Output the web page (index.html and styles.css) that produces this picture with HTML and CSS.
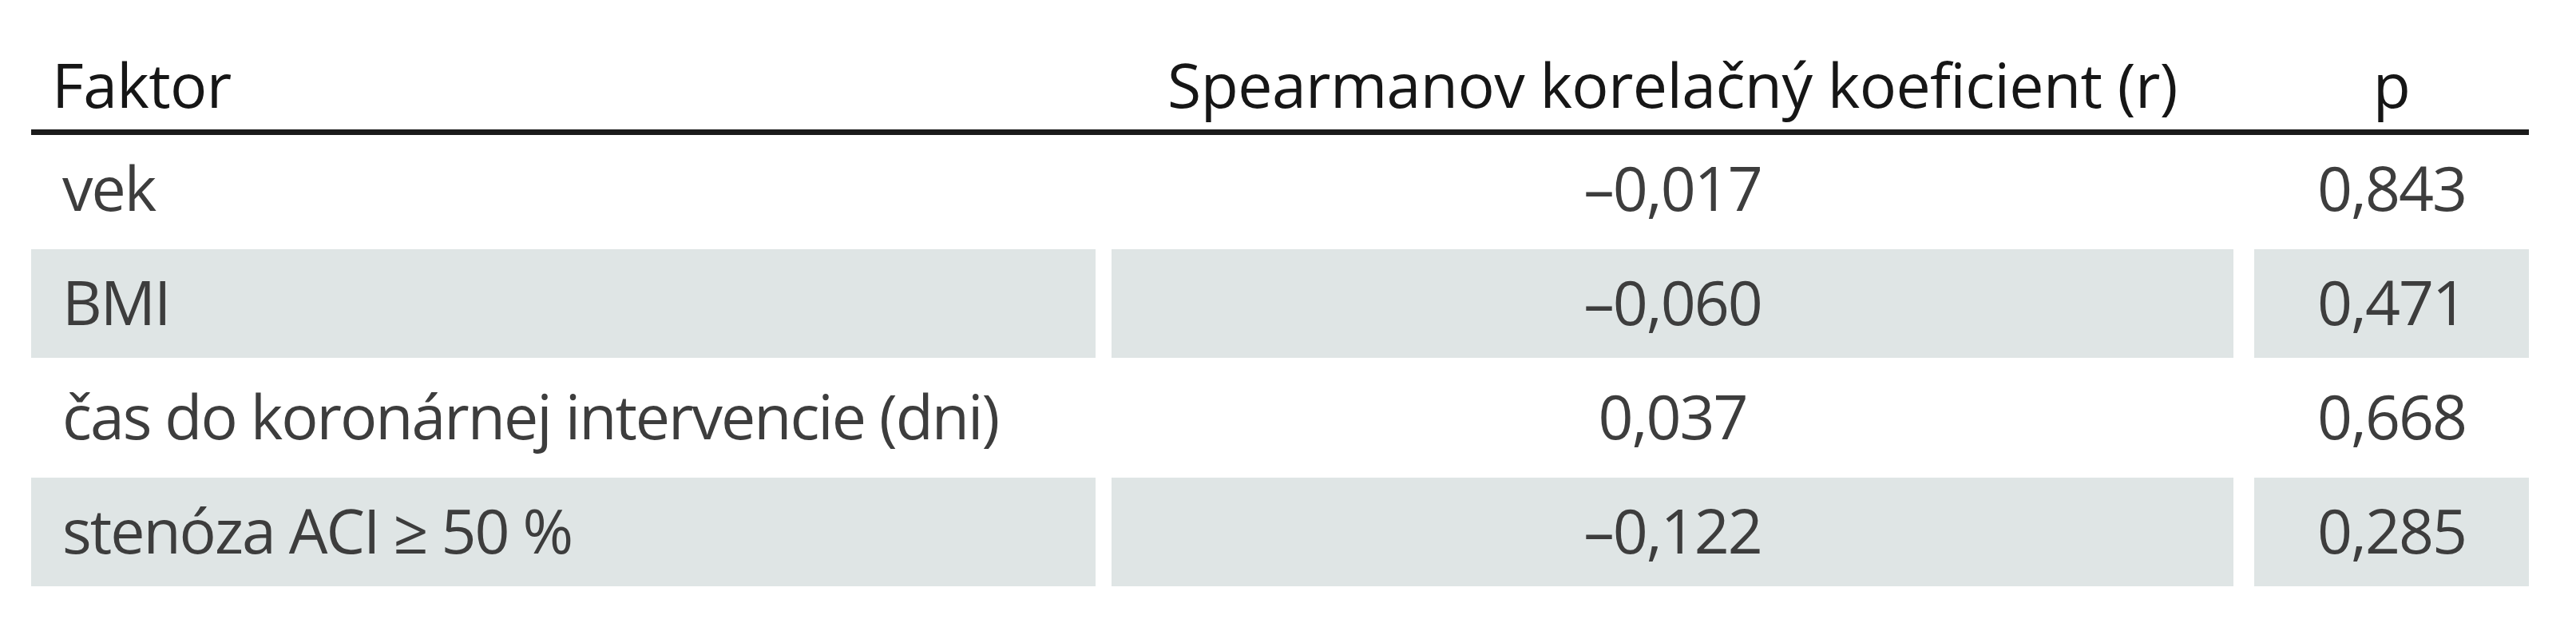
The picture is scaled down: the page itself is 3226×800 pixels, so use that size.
FILE: index.html
```html
<!DOCTYPE html>
<html lang="sk">
<head>
<meta charset="utf-8">
<title>Spearmanov korelačný koeficient</title>
<link rel="stylesheet" href="styles.css">
</head>
<body>
<table class="corr">
  <colgroup>
    <col class="c-factor">
    <col class="c-r">
    <col class="c-p">
  </colgroup>
  <thead>
    <tr>
      <th class="h-factor">Faktor</th>
      <th class="h-r">Spearmanov korelačný koeficient (r)</th>
      <th class="h-p">p</th>
    </tr>
  </thead>
  <tbody>
    <tr>
      <td class="factor">vek</td>
      <td class="r">–0,017</td>
      <td class="p">0,843</td>
    </tr>
    <tr class="shade">
      <td class="factor">BMI</td>
      <td class="r">–0,060</td>
      <td class="p">0,471</td>
    </tr>
    <tr>
      <td class="factor">čas do koronárnej intervencie (dni)</td>
      <td class="r">0,037</td>
      <td class="p">0,668</td>
    </tr>
    <tr class="shade">
      <td class="factor">stenóza ACI ≥ 50 %</td>
      <td class="r">–0,122</td>
      <td class="p">0,285</td>
    </tr>
  </tbody>
</table>
</body>
</html>
```

FILE: styles.css
```css
html, body {
  margin: 0;
  padding: 0;
  background: #ffffff;
}

body {
  font-family: "Open Sans", "Noto Sans", sans-serif;
  font-size: 77px;
}

.corr {
  margin-left: 39px;
  border-collapse: separate;
  border-spacing: 0;
  table-layout: fixed;
  width: 3128px;
}

.c-factor { width: 1353px; }
.c-r { width: 1431px; }
.c-p { width: 344px; }

.corr th {
  font-weight: 400;
  color: #161616;
  letter-spacing: -0.6px;
  height: 100px;
  line-height: 100px;
  padding: 56px 0 6px 0;
  border-bottom: 7px solid #1b1b1b;
  vertical-align: top;
  white-space: nowrap;
}

.corr th.h-factor {
  text-align: left;
  padding-left: 26px;
  padding-right: 20px;
}

.corr th.h-r {
  text-align: center;
  padding-right: 26px;
}

.corr th.h-p {
  text-align: center;
}

.corr td {
  color: #3d3d3d;
  letter-spacing: -2px;
  height: 132px;
  line-height: 132px;
  padding: 0 0 4px 0;
  vertical-align: top;
  white-space: nowrap;
  border-bottom: 7px solid transparent;
  background-clip: padding-box;
}

.corr td.factor {
  text-align: left;
  padding-left: 39px;
  border-right: 20px solid transparent;
}

.corr td.r {
  text-align: center;
  border-right: 26px solid transparent;
}

.corr td.p {
  text-align: center;
}

.corr tr.shade td {
  background-color: #dfe5e5;
}
```
